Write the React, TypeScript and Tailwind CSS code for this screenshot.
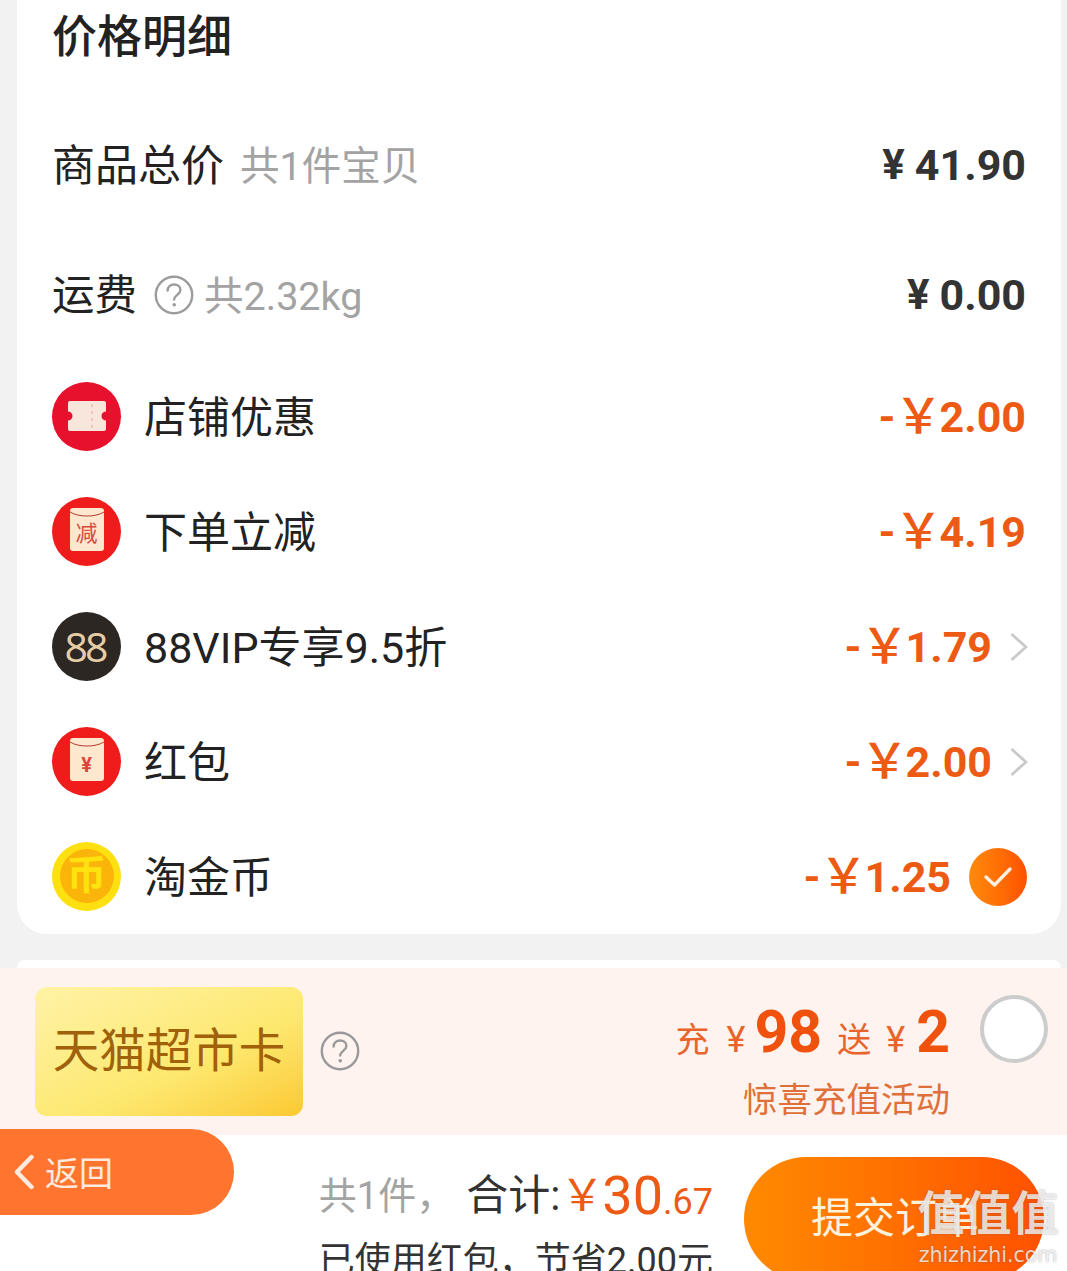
import React from 'react';

const FONT = "font-['Roboto','Noto_Sans_CJK_SC',sans-serif]";
const YUAN = '\uFFE5';

const QuestionIcon = ({ size, color }: { size: number; color: string }) => (
  <svg width={size} height={size} viewBox="0 0 40 40" fill="none" className="shrink-0">
    <circle cx="20" cy="20" r="18.2" stroke={color} strokeWidth="2.4" />
    <path d="M13.6 15.6c0-3.8 2.9-6.1 6.5-6.1 3.5 0 6.3 2.2 6.3 5.4 0 4.6-5.7 4.7-6.2 9.6" stroke={color} strokeWidth="2.4" strokeLinecap="round" />
    <circle cx="20.2" cy="29.8" r="1.8" fill={color} />
  </svg>
);

const Chevron = () => (
  <svg width="18" height="30" viewBox="0 0 18 30" fill="none" className="shrink-0">
    <path d="M1.5 2 16 15 1.5 28" stroke="#c9c9c9" strokeWidth="2.8" />
  </svg>
);

const TicketIcon = () => (
  <div className="flex h-[69px] w-[69px] items-center justify-center rounded-full bg-[#e8112d]">
    <svg width="38" height="30" viewBox="0 0 38 30">
      <path d="M2 0h34a2 2 0 0 1 2 2v8.500a4.500 4.500 0 0 0 0 9V28a2 2 0 0 1-2 2H2a2 2 0 0 1-2-2v-8.500a4.500 4.500 0 0 0 0-9V2a2 2 0 0 1 2-2z" fill="#f8e6dc" />
      <path d="M24 3v24" stroke="#e8b9ae" strokeWidth="1.4" strokeDasharray="3 4" />
    </svg>
  </div>
);

const PacketIcon = ({ children }: { children: React.ReactNode }) => (
  <div className="flex h-[69px] w-[69px] items-center justify-center rounded-full bg-[#f01c1c] pb-[3px]">
    <div className="relative flex h-[43px] w-[34px] items-end justify-center overflow-hidden rounded-[3px] bg-[#fde8cf] pb-[6px]">
      <svg width="34" height="12" viewBox="0 0 34 12" fill="none" className="absolute left-0 top-0">
        <path d="M0 4c5 3 11 4 17 4s12-1 17-4" stroke="#b43a2c" strokeWidth="1" />
      </svg>
      {children}
    </div>
  </div>
);

const VipIcon = () => (
  <div className="flex h-[69px] w-[69px] items-center justify-center rounded-full bg-[#2d2724]">
    <span className="pr-[3px] font-['Open_Sans',sans-serif] text-[41px] font-normal leading-none tracking-[-3px] text-[#e6cda6]">88</span>
  </div>
);

const CoinIcon = () => (
  <div className="flex h-[69px] w-[69px] items-center justify-center rounded-full bg-[#fde00f]">
    <div className="flex h-[54px] w-[54px] items-center justify-center rounded-full bg-[#fbb40a]">
      <span className="text-[40px] font-bold leading-none text-[#ffe20e]">币</span>
    </div>
  </div>
);

const CheckIcon = () => (
  <div className="flex h-[58px] w-[58px] items-center justify-center rounded-full bg-gradient-to-r from-[#ff8a0c] to-[#ff5000]">
    <svg width="30" height="22" viewBox="0 0 30 22" fill="none">
      <path d="M3 11l8.500 8L27 3" stroke="#fff0e0" strokeWidth="3.4" strokeLinecap="round" strokeLinejoin="round" />
    </svg>
  </div>
);

const Discount = ({ value }: { value: string }) => (
  <span className="flex items-center text-[43px] font-bold leading-none text-[#ec5a14]">
    <span className="-mr-[1px]">-</span>
    <span className="-mr-[3px] text-[48px] font-medium">{YUAN}</span>
    <span>{value}</span>
  </span>
);

const Price = ({ value }: { value: string }) => (
  <span className="flex items-center text-[43px] font-bold leading-none text-[#333333]">
    <span className="mr-[10px] text-[42px]">¥</span>
    <span>{value}</span>
  </span>
);

const DiscountRow = ({ icon, label, value, trailing, className }: { icon: React.ReactNode; label: string; value: string; trailing?: React.ReactNode; className?: string }) => (
  <div className={`flex h-[70px] items-center ${className ?? 'mt-[45px]'}`}>
    <span className="shrink-0 pb-[2px]">{icon}</span>
    <span className="ml-[23px] pt-[3px] text-[43px] leading-none text-[#222222]">{label}</span>
    <div className="ml-auto flex items-center">
      <Discount value={value} />
      {trailing}
    </div>
  </div>
);

export default function App() {
  return (
    <div className={`relative flex h-[1271px] w-[1067px] flex-col overflow-hidden bg-[#f2f2f2] ${FONT}`}>
      {/* price details card */}
      <div className="ml-[17px] h-[934px] w-[1044px] shrink-0 rounded-b-[30px] bg-white pl-[35px] pr-[35px]">
        <div className="flex h-[72px] items-center pt-[2px] text-[45px] font-medium leading-none text-[#222222]">价格明细</div>

        <div className="mt-[57px] flex h-[72px] items-center">
          <span className="pt-[3px] text-[43px] leading-none text-[#222222]">商品总价</span>
          <span className="ml-[16px] pt-[3px] text-[39.5px] leading-none text-[#a3a3a3]">共1件宝贝</span>
          <span className="ml-auto"><Price value="41.90" /></span>
        </div>

        <div className="mt-[58px] flex h-[72px] items-center">
          <span className="pt-[3px] text-[42.5px] leading-none text-[#222222]">运费</span>
          <span className="ml-[17px]"><QuestionIcon size={40} color="#9c9c9c" /></span>
          <span className="ml-[10px] pt-[3px] text-[39.5px] leading-none text-[#a3a3a3]">共2.32kg</span>
          <span className="ml-auto"><Price value="0.00" /></span>
        </div>

        <DiscountRow className="mt-[51px]" icon={<TicketIcon />} label="店铺优惠" value="2.00" />
        <DiscountRow
          icon={<PacketIcon><span className="text-[22px] leading-none text-[#d9473a]">减</span></PacketIcon>}
          label="下单立减"
          value="4.19"
        />
        <DiscountRow icon={<VipIcon />} label="88VIP专享9.5折" value="1.79" trailing={<span className="-mr-[2px] ml-[18px]"><Chevron /></span>} />
        <DiscountRow
          icon={<PacketIcon><span className="text-[20px] font-bold leading-none text-[#d9473a]">¥</span></PacketIcon>}
          label="红包"
          value="2.00"
          trailing={<span className="-mr-[2px] ml-[18px]"><Chevron /></span>}
        />
        <DiscountRow icon={<CoinIcon />} label="淘金币" value="1.25" trailing={<span className="-mr-[1px] ml-[18px]"><CheckIcon /></span>} />
      </div>

      {/* top edge of the next card */}
      <div className="ml-[17px] mt-[26px] h-[8px] w-[1044px] shrink-0 rounded-t-[30px] bg-white" />

      {/* recharge banner */}
      <div className="flex h-[167px] shrink-0 items-start bg-[#fef3ef]">
        <div className="ml-[35px] mt-[19px] flex h-[129px] w-[268px] items-center justify-center rounded-[12px] bg-gradient-to-br from-[#fff3a6] via-[#fde86e] via-60% to-[#fbc92e]">
          <span className="text-[46.5px] leading-none text-[#a0610a]">天猫超市卡</span>
        </div>
        <span className="ml-[17px] mt-[63px]"><QuestionIcon size={40} color="#999999" /></span>
        <div className="ml-auto mt-[26px] flex flex-col items-end">
          <div className="flex h-[74px] items-center text-[#e8642a]">
            <span className="mt-[18px] text-[34px] leading-none">充</span>
            <span className="ml-[17px] mt-[18px] text-[36px] leading-none">¥</span>
            <span className="ml-[9px] text-[59px] font-bold leading-none text-[#f0520e]">98</span>
            <span className="ml-[15px] mt-[18px] text-[34px] leading-none">送</span>
            <span className="ml-[15px] mt-[18px] text-[36px] leading-none">¥</span>
            <span className="ml-[11px] text-[59px] font-bold leading-none text-[#f0520e]">2</span>
          </div>
          <span className="mt-[15px] text-[34.5px] leading-none text-[#e0703a]">惊喜充值活动</span>
        </div>
        <div className="ml-[30px] mr-[19px] mt-[27px] h-[68px] w-[68px] rounded-full border-[4px] border-[#cccccc] bg-white" />
      </div>

      {/* bottom bar */}
      <div className="flex flex-1 justify-end bg-white pr-[23px]">
        <div className="mr-[31px] mt-[32px] flex flex-col items-end">
          <div className="flex h-[58px] items-center whitespace-nowrap">
            <span className="text-[38px] leading-none text-[#a3a3a3]">共1件，</span>
            <span className="ml-[12px] text-[42px] leading-none text-[#333333]">合计:</span>
            <span className="text-[44px] leading-none text-[#ec5a14]">{YUAN}</span>
            <span className="-ml-[2px] text-[54px] leading-none text-[#ec5a14]">30</span>
            <span className="mt-[11px] text-[36px] leading-none text-[#ec5a14]">.67</span>
          </div>
          <span className="mt-[18px] whitespace-nowrap text-[36px] leading-none text-[#333333]">已使用红包，节省2.00元</span>
        </div>
        <div className="mt-[22px] flex h-[124px] w-[300px] shrink-0 items-start justify-start rounded-full bg-gradient-to-r from-[#ff8a00] to-[#ff5000] pl-[67px] pt-[41px]">
          <span className="whitespace-nowrap text-[42px] leading-none text-[#fff2dc]">提交订单</span>
        </div>
      </div>

      {/* back pill, floats over the banner */}
      <div className="absolute left-0 top-[1129px] flex h-[86px] w-[234px] items-center rounded-r-full bg-[#ff7530] pl-[13px]">
        <svg width="22" height="36" viewBox="0 0 22 36" fill="none">
          <path d="M18.500 3 4 18l14.500 15" stroke="#ffeadf" strokeWidth="4.4" strokeLinecap="round" strokeLinejoin="round" />
        </svg>
        <span className="ml-[10px] pt-[3px] text-[34px] leading-none text-[#ffe9dd]">返回</span>
      </div>

      {/* watermark */}
      <div className="absolute left-[917px] top-[1190px] flex w-[142px] flex-col items-center">
        <span className="whitespace-nowrap text-[47px] font-bold leading-none text-white/75 [text-shadow:0_0_2px_rgba(90,90,90,0.55)]">值值值</span>
        <span className="mt-[8px] whitespace-nowrap font-['DejaVu_Sans',sans-serif] text-[20.5px] leading-none text-white/75 [text-shadow:0_0_2px_rgba(90,90,90,0.55)]">zhizhizhi.com</span>
      </div>
    </div>
  );
}
